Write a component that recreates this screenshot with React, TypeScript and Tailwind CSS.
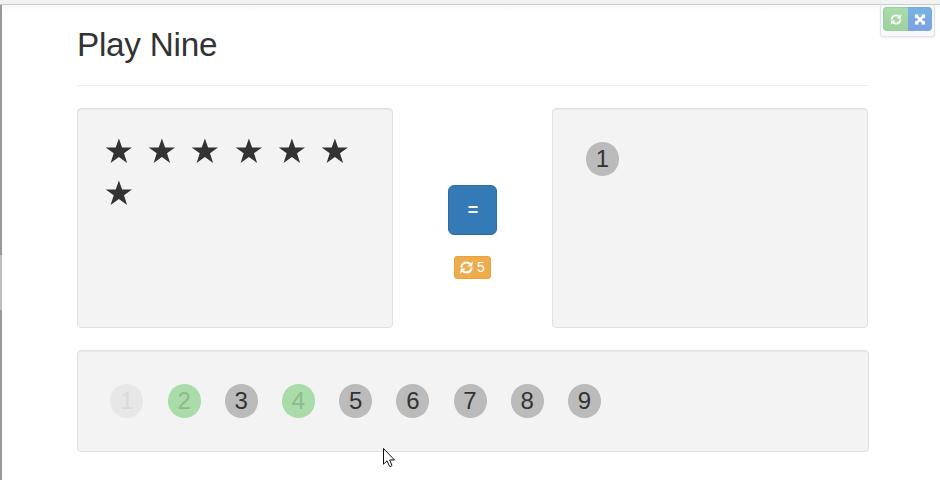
import React from "react";

const starCount = 7;
const numbers = [1, 2, 3, 4, 5, 6, 7, 8, 9];
const selected = [1];
const used = [2, 4];

function Star() {
  return (
    <svg className="h-[26px] w-[27px] shrink-0" viewBox="0 0 27 26" fill="#333333">
      <path d="M13.9 .4 17.1 9.4H27L19 15.2 22.1 24.9 13.9 19 5.6 24.9 8.7 15.2.7 9.4H10.7Z" />
    </svg>
  );
}

function Refresh({ className }: { className: string }) {
  return (
    <svg className={className} viewBox="0 0 14 14">
      <path
        d="M1.3 7C1.9 3.8 4 1.7 7 1.7C8.8 1.7 10.2 2.2 11.2 3.2M12.7 7C12.1 10.2 10 12.3 7 12.3C5.2 12.3 3.8 11.8 2.8 10.8"
        fill="none"
        stroke="currentColor"
        strokeWidth="2.2"
      />
      <path d="M14 .2 13 5.8H7.8ZM0 13.8 1 8.2H6.2Z" fill="currentColor" />
    </svg>
  );
}

function Fullscreen() {
  return (
    <svg className="h-[11px] w-[12px]" viewBox="0 0 12 12" fill="currentColor">
      <path d="M.5.5H5L3.9 1.8 6 4 8.1 1.8 7 .5H11.5V5L10.2 3.9 8 6 10.2 8.1 11.5 7V11.5H7L8.1 10.2 6 8 3.9 10.2 5 11.5H.5V7L1.8 8.1 4 6 1.8 3.9.5 5Z" />
    </svg>
  );
}

function NumberCircle({ value, tone }: { value: number; tone: string }) {
  return (
    <span
      className={`flex h-[34px] w-[33px] shrink-0 items-center justify-center rounded-full text-[24px] leading-[34px] ${tone}`}
    >
      {value}
    </span>
  );
}

function toneFor(n: number) {
  if (used.includes(n)) return "bg-[#a9dca9] text-[#8fb88f]";
  if (selected.includes(n)) return "bg-[#e7e7e7] text-[#dadada]";
  return "bg-[#bbbbbb] text-[#333333]";
}

const well = "rounded-[4px] border border-[#e1e1e1] bg-[#f3f3f3] shadow-[inset_0_1px_1px_rgba(0,0,0,0.05)]";

export default function App() {
  return (
    <div className="relative flex h-[480px] w-[940px] flex-col overflow-hidden bg-white font-['Liberation_Sans',Arial,sans-serif] text-[#333333]">
      <div className="h-[5px] shrink-0 border-b border-[#cccccc] bg-[#f2f2f2]" />
      <div className="flex flex-1">
        <div className="flex w-[2px] shrink-0 flex-col bg-[#999999]">
          <div className="mt-[250px] h-[55px] bg-[#bebebe]" />
        </div>
        <main className="flex-1 bg-linear-to-b from-[#f8f8f8] to-white to-[8px] pl-[75px]">
          <h1 className="h-[80px] pt-[21px] text-[33.3px] leading-[38px] tracking-[-0.25px]">Play Nine</h1>
          <hr className="w-[792px] border-[#eeeeee]" />
          <div className="mt-[22px] flex w-[791px]">
            <section className={`h-[220px] w-[316px] ${well}`}>
              <div className="flex flex-wrap gap-x-[16.2px] gap-y-[16px] pt-[29px] pr-[27px] pl-[27px]">
                {Array.from({ length: starCount }, (_, i) => (
                  <Star key={i} />
                ))}
              </div>
            </section>
            <div className="flex w-[159px] flex-col items-center pt-[77px]">
              <button className="h-[50px] w-[49px] rounded-[6px] border border-[#2e6da4] bg-[#337ab7] pt-[1px] pl-px text-[18px] font-bold text-white">
                =
              </button>
              <button className="mt-[21px] flex h-[23px] w-[37px] items-center justify-center gap-[4px] rounded-[3px] border border-[#eea236] bg-[#edac4e] text-[14px] text-white">
                <Refresh className="h-[13px] w-[13px]" />
                <span>5</span>
              </button>
            </div>
            <section className={`h-[220px] w-[316px] pt-[33px] pl-[33px] ${well}`}>
              {selected.map((n) => (
                <NumberCircle key={n} value={n} tone="bg-[#bbbbbb] text-[#333333]" />
              ))}
            </section>
          </div>
          <section className={`mt-[22px] flex h-[102px] w-[792px] gap-[24.2px] pt-[33px] pl-[32.4px] ${well}`}>
            {numbers.map((n) => (
              <NumberCircle key={n} value={n} tone={toneFor(n)} />
            ))}
          </section>
        </main>
      </div>
      <div className="absolute top-[5px] left-[880px] flex h-[32px] w-[55px] rounded-b-[3px] border border-t-0 border-[#dfe4ec] bg-[#f7f8f9] pt-[2px] pl-[2px] shadow-[0_1px_2px_rgba(0,0,0,0.08)]">
        <button className="flex h-[24px] w-[25px] items-center justify-center rounded-l-[4px] border border-r-0 border-[#98cf9e] bg-linear-to-b from-[#a9dcab] to-[#9fd09f] text-white">
          <Refresh className="h-[11px] w-[12px]" />
        </button>
        <button className="flex h-[24px] w-[24px] items-center justify-center rounded-r-[4px] border border-l-0 border-[#7ba9df] bg-linear-to-b from-[#76b3e0] to-[#7da0e0] text-white">
          <Fullscreen />
        </button>
      </div>
      <svg className="absolute top-[447px] left-[382px] h-[21px] w-[14px]" viewBox="0 0 14 21">
        <path
          d="M1.5 1.5V17.2L5 13.8 7.5 19.3Q8.8 20.2 10 18.5L7.7 13H12.5Z"
          fill="white"
          stroke="#111111"
          strokeWidth="1"
        />
      </svg>
    </div>
  );
}
